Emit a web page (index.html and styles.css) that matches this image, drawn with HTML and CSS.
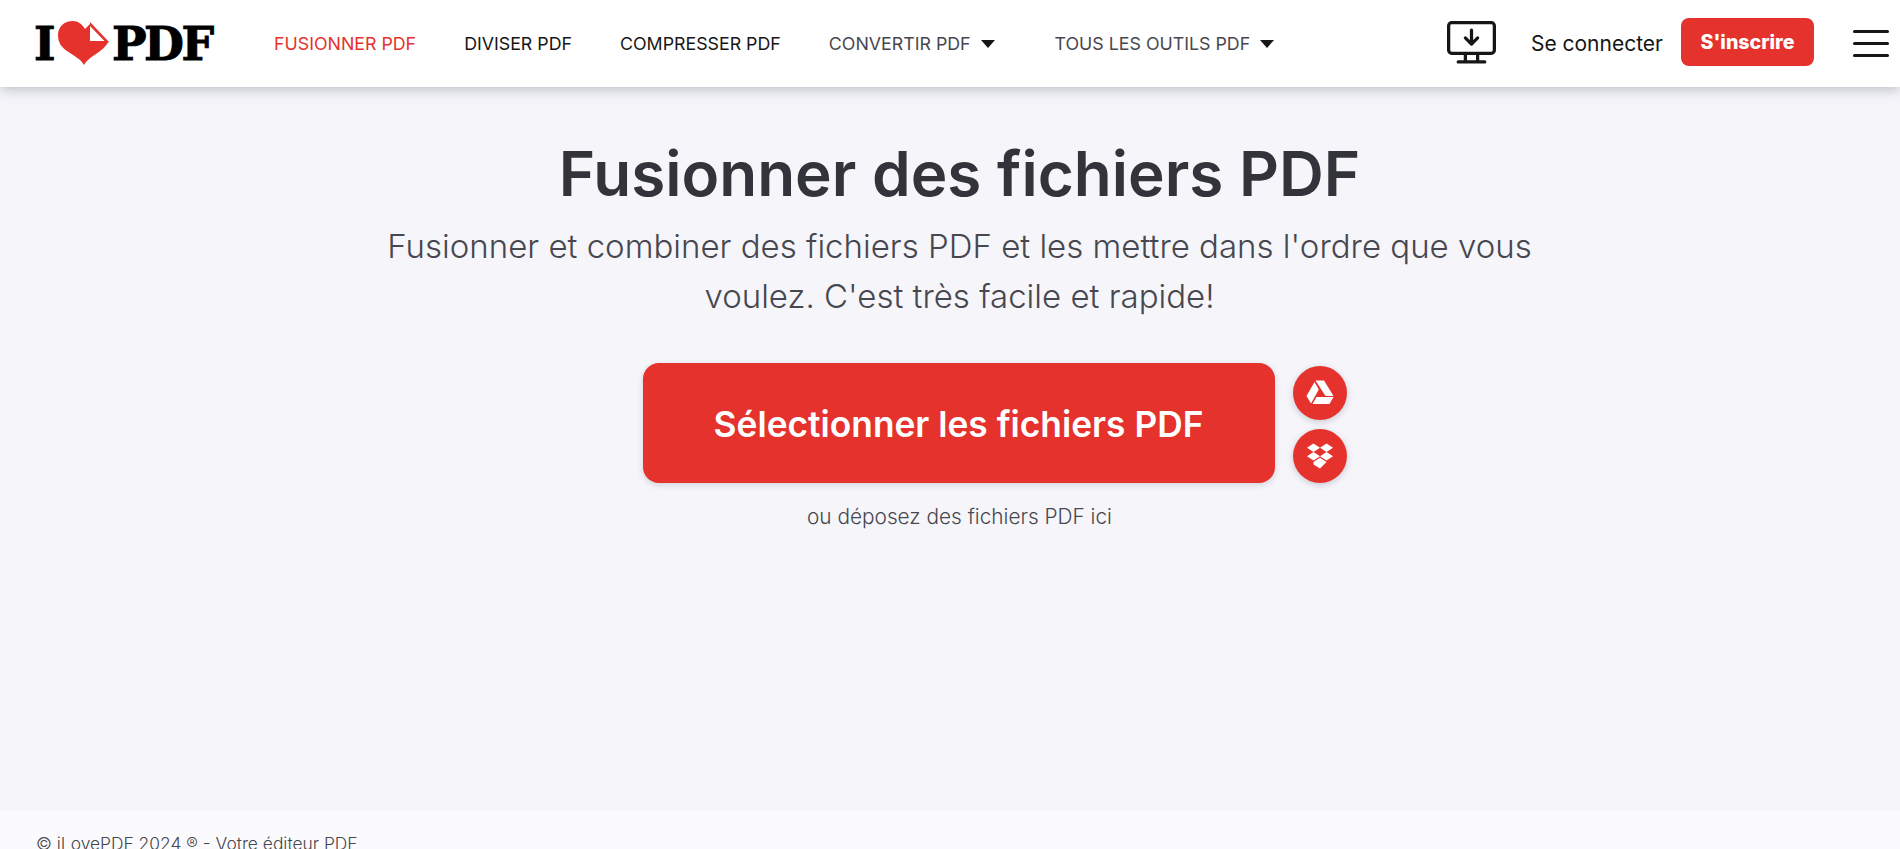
FILE: index.html
```html
<!DOCTYPE html>
<html lang="fr">
<head>
<meta charset="utf-8">
<title>Fusionner des fichiers PDF</title>
<link rel="stylesheet" href="styles.css">
</head>
<body>
<header class="header">
  <a class="logo" href="#">
    <span>I</span>
    <svg class="logo-heart" viewBox="0 0 51 44" width="51" height="44">
      <path fill="#e5322d" d="M26 44 C23 38 16 35 9 30 C3 26 0 21 0 14 C0 6 6 0 15 0 C20 0 24 3 27 8 L32 3 L32 21.500 L50 21.500 C47 27 41 31 35 35 C31 38 28 40 26 44 Z"/>
      <path fill="#e5322d" d="M32 1 L51 21 L49.500 22 L32 22 L32 20 L46.500 20 L32 5 Z"/>
    </svg>
    <span>PDF</span>
  </a>
  <nav class="nav">
    <a class="nav-link nav-active" href="#">FUSIONNER PDF</a>
    <a class="nav-link" href="#">DIVISER PDF</a>
    <a class="nav-link" href="#">COMPRESSER PDF</a>
    <a class="nav-link nav-menu nav-wide" href="#">CONVERTIR PDF<i class="caret"></i></a>
    <a class="nav-link nav-menu" href="#">TOUS LES OUTILS PDF<i class="caret"></i></a>
  </nav>
  <div class="actions">
    <svg class="desktop" viewBox="0 0 48 42" width="49" height="43" fill="none" stroke="#161616" stroke-width="3.200">
      <rect x="1.600" y="1.600" width="44.800" height="30" rx="3"/>
      <path d="M18 32 V39 M30 32 V39 M11 40 H37" stroke-linecap="round"/>
      <path d="M24 9 V22 M18 16.500 L24 22.500 L30 16.500" stroke-linecap="round" stroke-linejoin="round"/>
    </svg>
    <a class="login" href="#">Se connecter</a>
    <a class="signup" href="#">S'inscrire</a>
    <div class="burger"><i></i><i></i><i></i></div>
  </div>
</header>
<main class="main">
  <h1 class="title">Fusionner des fichiers PDF</h1>
  <p class="subtitle">Fusionner et combiner des fichiers PDF et les mettre dans l'ordre que vous voulez. C'est très facile et rapide!</p>
  <div class="uploader">
    <a class="select" href="#">Sélectionner les fichiers PDF</a>
    <div class="clouds">
      <a class="cloud" href="#">
        <svg viewBox="0 0 28 25" width="28" height="25" fill="#fff">
          <path d="M9.500 0.500 H18 L27.500 16 H19.500 Z"/>
          <path d="M8.500 2 L12.800 9.500 L5 23.500 L0.500 16 Z"/>
          <path d="M6.500 24 L10.500 17 H27.500 L23.500 24 Z"/>
        </svg>
      </a>
      <a class="cloud" href="#">
        <svg viewBox="0 0 28 26" width="28" height="26" fill="#fff">
          <path d="M7.500 0.500 L14 4.700 L7.500 9 L1 4.700 Z"/>
          <path d="M20.500 0.500 L27 4.700 L20.500 9 L14 4.700 Z"/>
          <path d="M7.500 9 L14 13.300 L7.500 17.500 L1 13.300 Z"/>
          <path d="M20.500 9 L27 13.300 L20.500 17.500 L14 13.300 Z"/>
          <path d="M7.500 19 L14 14.800 L20.500 19 L14 25.500 L7.500 21.500 Z"/>
        </svg>
      </a>
    </div>
  </div>
  <p class="hint">ou déposez des fichiers PDF ici</p>
</main>
<footer class="footer">© iLovePDF 2024 ® - Votre éditeur PDF</footer>
</body>
</html>
```
FILE: styles.css
```css
* { box-sizing: border-box; }
html, body { height: 100%; }
body {
  margin: 0;
  height: 849px;
  overflow: hidden;
  display: flex;
  flex-direction: column;
  background: #f5f5fa;
  color: #383e45;
  font-family: Inter, "Liberation Sans", sans-serif;
}
a { color: inherit; text-decoration: none; }
.header {
  flex: 0 0 87px;
  display: flex;
  align-items: center;
  padding-left: 34px;
  background: #fff;
  box-shadow: 0 2px 12px rgba(72, 72, 96, .35);
  position: relative;
}
.logo {
  flex: none;
  display: flex;
  align-items: center;
  width: 181px;
  color: #000;
  font-family: "DejaVu Serif", serif;
  font-weight: 700;
  font-size: 46px;
  line-height: 44px;
  letter-spacing: -2.500px;
  -webkit-text-stroke: 1px #000;
}
.logo-heart { margin: -1px 3px 0 5px; flex: none; }
.nav { display: flex; align-items: center; margin-left: 59px; }
.nav-link {
  font-size: 17.800px;
  font-weight: 400;
  color: #161616;
  margin-right: 48px;
}
.nav-active { color: #e5322d; }
.nav-menu { color: #47474f; display: flex; align-items: center; }
.nav-wide { margin-right: 60px; }
.caret {
  width: 0;
  height: 0;
  margin-left: 10px;
  border-left: 7px solid transparent;
  border-right: 7px solid transparent;
  border-top: 8px solid #161616;
}
.actions { margin-left: auto; display: flex; align-items: center; }
.desktop { margin: 0 35px 3px 0; }
.login { font-size: 21px; font-weight: 400; color: #161616; margin-right: 18px; }
.signup {
  width: 133px;
  height: 48px;
  margin-bottom: 3px;
  display: flex;
  align-items: center;
  justify-content: center;
  border-radius: 8px;
  background: #e5322d;
  color: #fff;
  font-size: 19.600px;
  font-weight: 800;
}
.burger {
  width: 36px;
  margin: 0 11px 0 39px;
  display: flex;
  flex-direction: column;
  gap: 9px;
}
.burger i { display: block; height: 3px; border-radius: 2px; background: #161616; }
.main {
  flex: 1;
  min-height: 0;
  display: flex;
  flex-direction: column;
  align-items: center;
  padding: 50px 0 0 19px;
  text-align: center;
}
.title {
  margin: 0;
  font-size: 62px;
  line-height: 74px;
  font-weight: 600;
  color: #33333b;
}
.subtitle {
  width: 1200px;
  margin: 11px 0 0;
  font-size: 33px;
  line-height: 49.500px;
  font-weight: 300;
  color: #47474f;
}
.uploader { display: flex; align-items: center; margin: 42px 0 0 70px; }
.select {
  width: 632px;
  height: 120px;
  padding-top: 2px;
  display: flex;
  align-items: center;
  justify-content: center;
  border-radius: 16px;
  background: #e5322d;
  color: #fff;
  font-size: 35.300px;
  font-weight: 600;
  box-shadow: 0 2px 6px rgba(72, 72, 96, .2);
}
.clouds { display: flex; flex-direction: column; gap: 9px; margin: 2px 0 0 18px; }
.cloud {
  width: 54px;
  height: 54px;
  display: flex;
  align-items: center;
  justify-content: center;
  border-radius: 50%;
  background: #e5322d;
  box-shadow: 0 2px 6px rgba(72, 72, 96, .25);
}
.hint { margin: 22px 0 0; font-size: 20.800px; line-height: 24px; font-weight: 300; color: #47474f; }
.footer {
  flex: 0 0 39px;
  min-height: 0;
  overflow: hidden;
  padding: 22px 36px 0;
  background: #fbfbfd;
  font-size: 17.400px;
  line-height: 24px;
  font-weight: 300;
  color: #47474f;
  white-space: nowrap;
}
```
